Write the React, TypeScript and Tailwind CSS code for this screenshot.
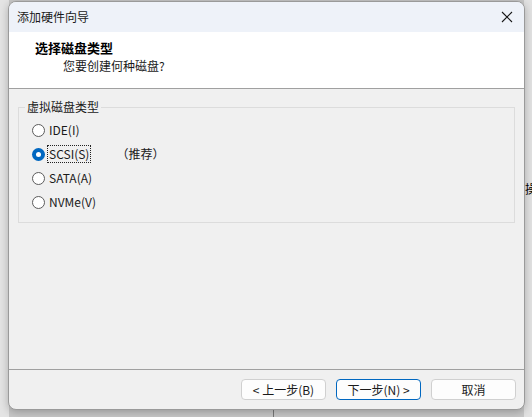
import React from "react";

const FONT = { fontFamily: '"Microsoft YaHei UI", "Noto Sans CJK SC", "Noto Sans", sans-serif' };

function Radio({ checked }: { checked?: boolean }) {
  if (checked) {
    return (
      <span className="flex h-[13px] w-[13px] shrink-0 items-center justify-center rounded-full bg-[#0067c0]">
        <span className="h-[5px] w-[5px] rounded-full bg-white" />
      </span>
    );
  }
  return <span className="h-[13px] w-[13px] shrink-0 rounded-full border border-[#5c5c5c] bg-white" />;
}

function Option({ label, checked, note }: { label: string; checked?: boolean; note?: string }) {
  return (
    <div className="flex h-6 items-center">
      <Radio checked={checked} />
      <span
        className={`ml-[3px] px-px leading-[16px] ${
          checked ? "outline outline-1 outline-dotted outline-[#222]" : ""
        }`}
      >
        {label}
      </span>
      {note && <span className="ml-[26px]">{note}</span>}
    </div>
  );
}

function Btn({ children, primary }: { children: React.ReactNode; primary?: boolean }) {
  return (
    <button
      className={`flex h-[21px] w-[85px] items-center justify-center rounded-[4px] border bg-[#fdfdfd] text-[12px] text-[#1a1a1a] ${
        primary ? "border-[#0067c0]" : "border-[#d0d0d0]"
      }`}
    >
      {children}
    </button>
  );
}

export default function App() {
  return (
    <div className="relative h-[417px] w-[532px] overflow-hidden bg-[#c8c8c8] text-[12px] text-[#1a1a1a]" style={FONT}>
      {/* stuff behind the dialog */}
      <div className="absolute left-0 top-0 h-full w-[9px] bg-[#e4e4e4]" />
      <div className="absolute right-0 top-0 h-full w-[8px] bg-[#e2e2e2]">
        <span className="absolute left-[1px] top-[183px] text-[12px] leading-none text-black">操</span>
      </div>
      <div className="absolute left-[273px] top-[408px] h-[9px] w-px bg-[#777]" />

      <div className="relative ml-2 mt-px flex h-[409px] w-[517px] flex-col overflow-hidden rounded-[8px] border border-[#9a9a9a] bg-[#f0f0f0] shadow-[0_2px_8px_rgba(0,0,0,0.25)]">
        {/* title bar */}
        <div className="flex h-[30px] shrink-0 items-center justify-between bg-[#eef2f9] pl-2 pr-[8px]">
          <span>添加硬件向导</span>
          <svg width="12" height="12" viewBox="0 0 12 12" className="mr-[3px]">
            <path d="M1 1L11 11M11 1L1 11" stroke="#1a1a1a" strokeWidth="1.1" />
          </svg>
        </div>

        {/* header */}
        <div className="flex h-[56px] shrink-0 flex-col bg-white pl-[26px] pt-[7px]">
          <span className="text-[13px] font-bold leading-[18px] text-black">选择磁盘类型</span>
          <span className="ml-[28px] leading-[18px]">您要创建何种磁盘?</span>
        </div>
        <div className="h-px shrink-0 bg-[#a0a0a0]" />

        {/* body */}
        <div className="flex-1 px-[9px] pt-[10px]">
          <fieldset className="h-[124px] border border-[#dcdcdc] pl-[14px] pr-2 pt-[3px]">
            <legend className="-ml-[8px] px-[2px] leading-[16px]">虚拟磁盘类型</legend>
            <div className="-ml-[1px] flex flex-col">
              <Option label="IDE(I)" />
              <Option label="SCSI(S)" checked note="（推荐）" />
              <Option label="SATA(A)" />
              <Option label="NVMe(V)" />
            </div>
          </fieldset>
        </div>

        {/* footer */}
        <div className="h-px shrink-0 bg-[#a0a0a0]" />
        <div className="flex h-[39px] shrink-0 items-center justify-end gap-[10px] pr-[8px]">
          <Btn>&lt; 上一步(B)</Btn>
          <Btn primary>下一步(N) &gt;</Btn>
          <Btn>取消</Btn>
        </div>
      </div>
    </div>
  );
}
